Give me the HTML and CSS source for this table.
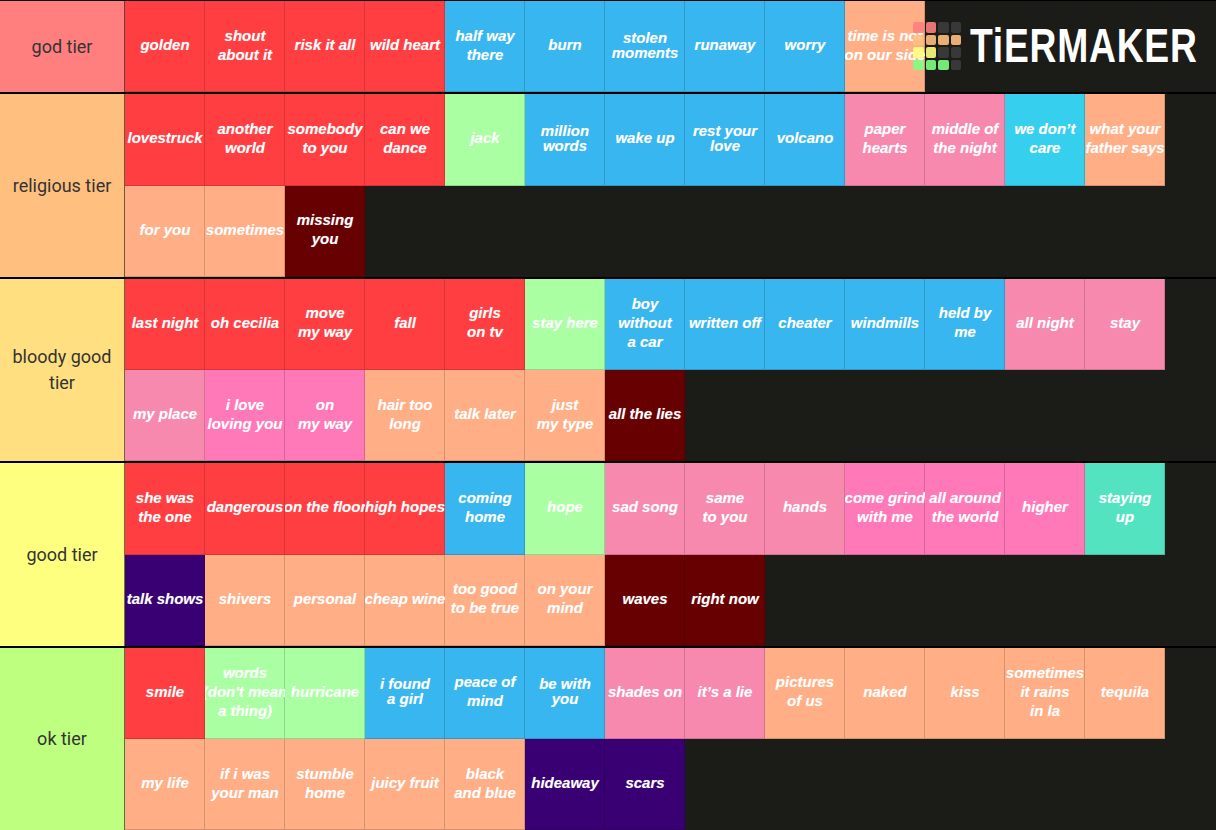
FILE: index.html
```html
<!DOCTYPE html>
<html lang="en">
<head>
<meta charset="utf-8">
<title>Tier list</title>
<link rel="stylesheet" href="styles.css">
</head>
<body>
<div class="board">
  <div class="tier">
    <div class="label l-god">god tier</div>
    <div class="items">
      <div class="item red"><span>golden</span></div>
      <div class="item red"><span>shout<br>about it</span></div>
      <div class="item red"><span>risk it all</span></div>
      <div class="item red"><span>wild heart</span></div>
      <div class="item blue"><span>half way<br>there</span></div>
      <div class="item blue"><span>burn</span></div>
      <div class="item blue tight"><span>stolen<br>moments</span></div>
      <div class="item blue"><span>runaway</span></div>
      <div class="item blue"><span>worry</span></div>
      <div class="item peach"><span>time is not<br>on our side</span></div>
    </div>
  </div>

  <div class="tier">
    <div class="label l-religious">religious tier</div>
    <div class="items">
      <div class="item red"><span>lovestruck</span></div>
      <div class="item red"><span>another<br>world</span></div>
      <div class="item red"><span>somebody<br>to you</span></div>
      <div class="item red"><span>can we<br>dance</span></div>
      <div class="item green"><span>jack</span></div>
      <div class="item blue tight"><span>million<br>words</span></div>
      <div class="item blue"><span>wake up</span></div>
      <div class="item blue tight"><span>rest your<br>love</span></div>
      <div class="item blue"><span>volcano</span></div>
      <div class="item pink"><span>paper<br>hearts</span></div>
      <div class="item pink"><span>middle of<br>the night</span></div>
      <div class="item cyan"><span>we don’t<br>care</span></div>
      <div class="item peach"><span>what your<br>father says</span></div>
      <div class="item peach"><span>for you</span></div>
      <div class="item peach"><span>sometimes</span></div>
      <div class="item maroon"><span>missing<br>you</span></div>
    </div>
  </div>

  <div class="tier">
    <div class="label l-bloody">bloody good tier</div>
    <div class="items">
      <div class="item red"><span>last night</span></div>
      <div class="item red"><span>oh cecilia</span></div>
      <div class="item red"><span>move<br>my way</span></div>
      <div class="item red"><span>fall</span></div>
      <div class="item red"><span>girls<br>on tv</span></div>
      <div class="item green"><span>stay here</span></div>
      <div class="item blue"><span>boy<br>without<br>a car</span></div>
      <div class="item blue"><span>written off</span></div>
      <div class="item blue"><span>cheater</span></div>
      <div class="item blue"><span>windmills</span></div>
      <div class="item blue"><span>held by<br>me</span></div>
      <div class="item pink"><span>all night</span></div>
      <div class="item pink"><span>stay</span></div>
      <div class="item pink"><span>my place</span></div>
      <div class="item hot"><span>i love<br>loving you</span></div>
      <div class="item hot"><span>on<br>my way</span></div>
      <div class="item peach"><span>hair too<br>long</span></div>
      <div class="item peach"><span>talk later</span></div>
      <div class="item peach"><span>just<br>my type</span></div>
      <div class="item maroon"><span>all the lies</span></div>
    </div>
  </div>

  <div class="tier">
    <div class="label l-good">good tier</div>
    <div class="items">
      <div class="item red"><span>she was<br>the one</span></div>
      <div class="item red"><span>dangerous</span></div>
      <div class="item red"><span>on the floor</span></div>
      <div class="item red"><span>high hopes</span></div>
      <div class="item blue"><span>coming<br>home</span></div>
      <div class="item green"><span>hope</span></div>
      <div class="item pink"><span>sad song</span></div>
      <div class="item pink"><span>same<br>to you</span></div>
      <div class="item pink"><span>hands</span></div>
      <div class="item hot"><span>come grind<br>with me</span></div>
      <div class="item hot"><span>all around<br>the world</span></div>
      <div class="item hot"><span>higher</span></div>
      <div class="item teal"><span>staying<br>up</span></div>
      <div class="item purple"><span>talk shows</span></div>
      <div class="item peach"><span>shivers</span></div>
      <div class="item peach"><span>personal</span></div>
      <div class="item peach"><span>cheap wine</span></div>
      <div class="item peach"><span>too good<br>to be true</span></div>
      <div class="item peach"><span>on your<br>mind</span></div>
      <div class="item maroon"><span>waves</span></div>
      <div class="item maroon"><span>right now</span></div>
    </div>
  </div>

  <div class="tier">
    <div class="label l-ok">ok tier</div>
    <div class="items">
      <div class="item red"><span>smile</span></div>
      <div class="item green"><span>words<br>(don't mean<br>a thing)</span></div>
      <div class="item green"><span>hurricane</span></div>
      <div class="item blue tight"><span>i found<br>a girl</span></div>
      <div class="item blue"><span>peace of<br>mind</span></div>
      <div class="item blue tight"><span>be with<br>you</span></div>
      <div class="item pink"><span>shades on</span></div>
      <div class="item pink"><span>it’s a lie</span></div>
      <div class="item peach"><span>pictures<br>of us</span></div>
      <div class="item peach"><span>naked</span></div>
      <div class="item peach"><span>kiss</span></div>
      <div class="item peach"><span>sometimes<br>it rains<br>in la</span></div>
      <div class="item peach"><span>tequila</span></div>
      <div class="item peach"><span>my life</span></div>
      <div class="item peach"><span>if i was<br>your man</span></div>
      <div class="item peach"><span>stumble<br>home</span></div>
      <div class="item peach"><span>juicy fruit</span></div>
      <div class="item peach"><span>black<br>and blue</span></div>
      <div class="item purple"><span>hideaway</span></div>
      <div class="item purple"><span>scars</span></div>
    </div>
  </div>

  <div class="logo">
    <div class="logo-grid">
      <i class="sq s-red"></i><i class="sq s-red"></i><i class="sq s-off"></i><i class="sq s-off"></i>
      <i class="sq s-orange"></i><i class="sq s-orange"></i><i class="sq s-orange"></i><i class="sq s-orange"></i>
      <i class="sq s-yellow"></i><i class="sq s-yellow"></i><i class="sq s-off"></i><i class="sq s-off"></i>
      <i class="sq s-green"></i><i class="sq s-green"></i><i class="sq s-green"></i><i class="sq s-off"></i>
    </div>
    <div class="logo-text">TiERMAKER</div>
  </div>
</div>
</body>
</html>
```

FILE: styles.css
```css
html, body {
  margin: 0;
  padding: 0;
  background: #1b1b17;
}

body {
  width: 1216px;
  height: 830px;
  overflow: hidden;
}

.board {
  position: relative;
  width: 1216px;
  border-top: 1px solid #000;
  background: #1b1b17;
}

.tier {
  display: flex;
}

.tier + .tier {
  border-top: 2px solid #000;
}

.label {
  flex: none;
  width: 124px;
  border-right: 1px solid rgba(0, 0, 0, 0.55);
  display: flex;
  align-items: center;
  justify-content: center;
  text-align: center;
  padding: 0 8px;
  box-sizing: border-box;
  width: 125px;
  font-family: Roboto, "Noto Sans", sans-serif;
  font-size: 18px;
  line-height: 26px;
  color: #333;
}

.l-god { background: #ff7f7f; }
.l-religious { background: #ffbf7f; }
.l-bloody { background: #ffdf7f; }
.l-good { background: #ffff7f; }
.l-ok { background: #bfff7f; }

.items {
  flex: 1;
  display: flex;
  flex-wrap: wrap;
  align-content: flex-start;
}

.item {
  width: 80px;
  height: 91.25px;
  box-sizing: border-box;
  padding-bottom: 4px;
  display: flex;
  align-items: center;
  justify-content: center;
  overflow: hidden;
  box-shadow: inset -1px -1px 0 rgba(0, 0, 0, 0.16);
  font-family: "Liberation Sans", Arial, sans-serif;
  font-weight: 700;
  font-style: italic;
  font-size: 15px;
  line-height: 19px;
  color: #fff;
  text-shadow: 0 0 1px rgba(255, 255, 255, 0.35);
}

.item span {
  flex: none;
  white-space: nowrap;
  text-align: center;
}

.item.tight {
  line-height: 15px;
}

.red { background: #ff3e42; }
.blue { background: #37b6ef; }
.peach { background: #ffae85; }
.green { background: #aaffa3; }
.pink { background: #f889ae; }
.hot { background: #ff78b8; }
.maroon { background: #670000; }
.purple { background: #380072; }
.teal { background: #53e3c1; }
.cyan { background: #37cfee; }

.logo {
  position: absolute;
  top: 20px;
  left: 913px;
  display: flex;
  align-items: flex-start;
  gap: 9px;
}

.logo-grid {
  display: grid;
  grid-template-columns: repeat(4, 10.5px);
  grid-auto-rows: 10.5px;
  gap: 2.1px;
  padding-top: 1px;
}

.sq {
  display: block;
  border-radius: 2px;
  opacity: 0.9;
}

.s-red { background: #ff7f7f; }
.s-orange { background: #ffbf7f; }
.s-yellow { background: #ffff7f; }
.s-green { background: #7fff7f; }
.s-off { background: #3c3c3c; }

.logo-text {
  font-family: "Liberation Sans", Arial, sans-serif;
  font-weight: 700;
  font-size: 49px;
  line-height: 1;
  color: #fff;
  letter-spacing: 1px;
  transform: scaleX(0.76);
  transform-origin: left top;
  white-space: nowrap;
}
```
